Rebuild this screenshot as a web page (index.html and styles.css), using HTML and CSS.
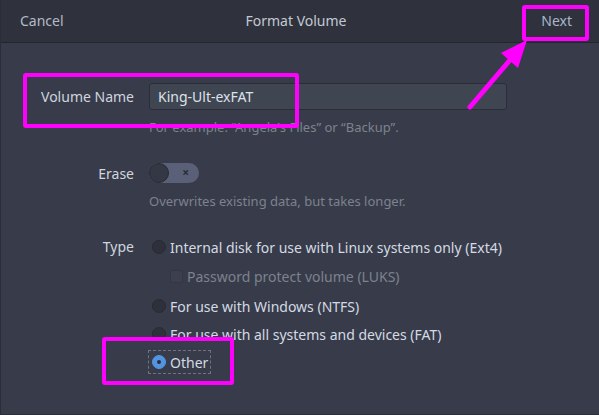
FILE: index.html
```html
<!DOCTYPE html>
<html>
<head>
<meta charset="utf-8">
<link rel="stylesheet" href="styles.css">
</head>
<body>
<div class="window">
  <header class="header">
    <span class="hbtn cancel">Cancel</span>
    <span class="title">Format Volume</span>
    <span class="hbtn next">Next</span>
  </header>
  <main class="form">
    <div class="row">
      <label class="lbl">Volume Name</label>
      <div class="input">King-Ult-exFAT</div>
    </div>
    <div class="row hint-row">
      <span class="lbl"></span>
      <span class="hint">For example: “Angela's Files” or “Backup”.</span>
    </div>
    <div class="row erase-row">
      <label class="lbl">Erase</label>
      <div class="switch"><span class="knob"></span><span class="x">×</span></div>
    </div>
    <div class="row hint-row2">
      <span class="lbl"></span>
      <span class="hint">Overwrites existing data, but takes longer.</span>
    </div>
    <div class="row type-row">
      <label class="lbl type-lbl">Type</label>
      <div class="opts">
        <div class="opt"><span class="radio"></span><span>Internal disk for use with Linux systems only (Ext4)</span></div>
        <div class="opt sub disabled"><span class="check"></span><span>Password protect volume (LUKS)</span></div>
        <div class="opt o3"><span class="radio"></span><span>For use with Windows (NTFS)</span></div>
        <div class="opt o4"><span class="radio"></span><span>For use with all systems and devices (FAT)</span></div>
        <div class="opt o5 focus"><span class="radio on"></span><span>Other</span></div>
      </div>
    </div>
  </main>
  <div class="mark m1"></div>
  <div class="mark m2"></div>
  <div class="mark m3"></div>
  <svg class="arrow" width="599" height="415" viewBox="0 0 599 415">
    <line x1="470" y1="107" x2="510" y2="60" stroke="#ff00ff" stroke-width="5" stroke-linecap="round"/>
    <polygon points="501,53 527,40 518,68" fill="#ff00ff"/>
  </svg>
</div>
</body>
</html>
```
FILE: styles.css
```css
* { box-sizing: border-box; }
html, body { margin: 0; padding: 0; }
body {
  background: #383c4a;
  font-family: "Noto Sans", "DejaVu Sans", sans-serif;
  font-size: 14px;
  color: #d3dae3;
}
.window {
  position: relative;
  width: 599px;
  height: 415px;
  overflow: hidden;
  border-left: 1px solid #2b2e38;
  border-bottom: 1px solid #2b2e38;
}
.header {
  height: 43px;
  background: #2f323d;
  border-bottom: 1px solid #232530;
  display: grid;
  grid-template-columns: 1fr auto 1fr;
  align-items: center;
  padding: 0 27px 1px 20px;
  margin-left: -1px;
  color: #b2bac6;
}
.cancel { justify-self: start; }
.next { justify-self: end; color: #a9b6c8; }
.title { color: #c3c9d2; }
.form {
  padding-top: 40px;
}
.row {
  display: flex;
  align-items: center;
  gap: 15px;
}
.lbl {
  width: 133px;
  flex: none;
  text-align: right;
  color: #cfd5de;
}
.input {
  width: 358px;
  height: 27px;
  background: #404552;
  border: 1px solid #2b2e39;
  border-radius: 3px;
  padding-left: 8px;
  display: flex;
  align-items: center;
  color: #dce2ea;
}
.hint {
  font-size: 13px;
  line-height: 16px;
  color: #7c828e;
}
.hint-row { margin-top: 9px; }
.erase-row { margin-top: 28px; }
.hint-row2 { margin-top: 10px; }
.type-row { margin-top: 27px; align-items: flex-start; }
.type-lbl { line-height: 22px; }
.switch {
  position: relative;
  width: 50px;
  height: 20px;
  border-radius: 10px;
  background: #5b6079;
  display: flex;
  align-items: center;
}
.knob {
  position: absolute;
  left: 0;
  top: 0;
  width: 20px;
  height: 20px;
  border-radius: 50%;
  background: #343844;
  border: 1px solid #272a33;
}
.x {
  position: absolute;
  right: 10px;
  top: 1px;
  font-size: 12px;
  line-height: 17px;
  color: #2a2d36;
  font-weight: bold;
}
.opts {
  display: flex;
  flex-direction: column;
}
.opt {
  display: flex;
  align-items: center;
  gap: 4px;
  height: 22px;
  padding: 2px 2px 2px 3px;
  width: max-content;
  color: #d3dae3;
}
.opt.sub { padding-left: 21px; margin-top: 7px; }
.opt.disabled { color: #7c828e; }
.o3 { margin-top: 8px; }
.o4 { margin-top: 6px; }
.o5 { margin-top: 6px; }
.focus {
  outline: 1px dashed rgba(211, 218, 227, 0.35);
  outline-offset: 0;
}
.radio {
  width: 14px;
  height: 14px;
  border-radius: 50%;
  background: #2e313b;
  border: 1px solid #272a33;
  flex: none;
  position: relative;
}
.radio.on {
  background: #5294e2;
  border-color: #5294e2;
}
.radio.on::after {
  content: "";
  position: absolute;
  left: 4px;
  top: 4px;
  width: 4px;
  height: 4px;
  border-radius: 50%;
  background: #2b2e39;
}
.check {
  width: 13px;
  height: 13px;
  border-radius: 2px;
  background: #3c404c;
  border: 1px solid #343743;
  flex: none;
}
.mark {
  position: absolute;
  border: 4px solid #ff00ff;
  border-radius: 3px;
}
.m1 { left: 22px; top: 73px; width: 276px; height: 55px; }
.m2 { left: 521px; top: 5px; width: 67px; height: 36px; }
.m3 { left: 101px; top: 337px; width: 132px; height: 48px; }
.arrow {
  position: absolute;
  left: -1px;
  top: 0;
}
```
